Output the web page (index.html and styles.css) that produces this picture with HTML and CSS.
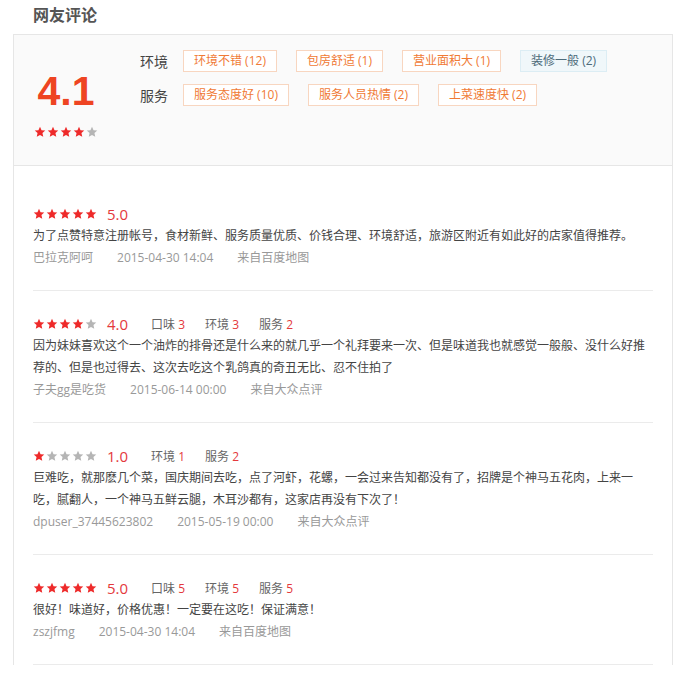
FILE: index.html
```html
<!DOCTYPE html>
<html lang="zh-CN">
<head>
  <meta charset="UTF-8">
  <title>网友评论</title>
  <link rel="stylesheet" href="styles.css">
</head>
<body>
  <svg class="defs" width="0" height="0">
    <symbol id="star" viewBox="0 0 24 24">
      <path d="M12 1.5l3.1 6.9 7.4.8-5.6 5 1.6 7.4L12 17.8l-6.5 3.8 1.6-7.4-5.6-5 7.4-.8z"/>
    </symbol>
  </svg>

  <div class="comments">
    <h2 class="title">网友评论</h2>
    <div class="panel">
      <!-- summary -->
      <div class="summary">
        <div class="score-box">
          <div class="score">4.1</div>
          <div class="stars">
            <svg class="on"><use href="#star"/></svg>
            <svg class="on"><use href="#star"/></svg>
            <svg class="on"><use href="#star"/></svg>
            <svg class="on"><use href="#star"/></svg>
            <svg class="off"><use href="#star"/></svg>
          </div>
        </div>
        <div class="tags">
          <div class="tag-row">
            <span class="tag-label">环境</span>
            <span class="tag">环境不错 (12)</span>
            <span class="tag">包房舒适 (1)</span>
            <span class="tag">营业面积大 (1)</span>
            <span class="tag bad">装修一般 (2)</span>
          </div>
          <div class="tag-row">
            <span class="tag-label">服务</span>
            <span class="tag">服务态度好 (10)</span>
            <span class="tag">服务人员热情 (2)</span>
            <span class="tag">上菜速度快 (2)</span>
          </div>
        </div>
      </div>

      <!-- review list -->
      <ul class="review-list">
        <li class="review">
          <div class="rate-line">
            <div class="stars">
              <svg class="on"><use href="#star"/></svg>
              <svg class="on"><use href="#star"/></svg>
              <svg class="on"><use href="#star"/></svg>
              <svg class="on"><use href="#star"/></svg>
              <svg class="on"><use href="#star"/></svg>
            </div>
            <span class="rate">5.0</span>
          </div>
          <p class="content">为了点赞特意注册帐号，食材新鲜、服务质量优质、价钱合理、环境舒适，旅游区附近有如此好的店家值得推荐。</p>
          <div class="meta"><span>巴拉克阿呵</span><span>2015-04-30 14:04</span><span>来自百度地图</span></div>
        </li>
        <li class="review">
          <div class="rate-line">
            <div class="stars">
              <svg class="on"><use href="#star"/></svg>
              <svg class="on"><use href="#star"/></svg>
              <svg class="on"><use href="#star"/></svg>
              <svg class="on"><use href="#star"/></svg>
              <svg class="off"><use href="#star"/></svg>
            </div>
            <span class="rate">4.0</span>
            <span class="aspect">口味 <em>3</em></span>
            <span class="aspect">环境 <em>3</em></span>
            <span class="aspect">服务 <em>2</em></span>
          </div>
          <p class="content">因为妹妹喜欢这个一个油炸的排骨还是什么来的就几乎一个礼拜要来一次、但是味道我也就感觉一般般、没什么好推荐的、但是也过得去、这次去吃这个乳鸽真的奇丑无比、忍不住拍了</p>
          <div class="meta"><span>子夫gg是吃货</span><span>2015-06-14 00:00</span><span>来自大众点评</span></div>
        </li>
        <li class="review">
          <div class="rate-line">
            <div class="stars">
              <svg class="on"><use href="#star"/></svg>
              <svg class="off"><use href="#star"/></svg>
              <svg class="off"><use href="#star"/></svg>
              <svg class="off"><use href="#star"/></svg>
              <svg class="off"><use href="#star"/></svg>
            </div>
            <span class="rate">1.0</span>
            <span class="aspect">环境 <em>1</em></span>
            <span class="aspect">服务 <em>2</em></span>
          </div>
          <p class="content">巨难吃，就那麽几个菜，国庆期间去吃，点了河虾，花螺，一会过来告知都没有了，招牌是个神马五花肉，上来一吃，腻翻人，一个神马五鲜云腿，木耳沙都有，这家店再没有下次了！</p>
          <div class="meta"><span>dpuser_37445623802</span><span>2015-05-19 00:00</span><span>来自大众点评</span></div>
        </li>
        <li class="review">
          <div class="rate-line">
            <div class="stars">
              <svg class="on"><use href="#star"/></svg>
              <svg class="on"><use href="#star"/></svg>
              <svg class="on"><use href="#star"/></svg>
              <svg class="on"><use href="#star"/></svg>
              <svg class="on"><use href="#star"/></svg>
            </div>
            <span class="rate">5.0</span>
            <span class="aspect">口味 <em>5</em></span>
            <span class="aspect">环境 <em>5</em></span>
            <span class="aspect">服务 <em>5</em></span>
          </div>
          <p class="content">很好！味道好，价格优惠！一定要在这吃！保证满意！</p>
          <div class="meta"><span>zszjfmg</span><span>2015-04-30 14:04</span><span>来自百度地图</span></div>
        </li>
      </ul>
    </div>
  </div>
</body>
</html>
```

FILE: styles.css
```css
body {
  margin: 0;
  background-color: #ffffff;
  font-family: "Open Sans", "Noto Sans CJK SC", sans-serif;
  font-size: 12px;
  color: #333333;
}
.defs {
  position: absolute;
  width: 0;
  height: 0;
}
.comments {
  width: 660px;
  margin-left: 13px;
}
.title {
  margin: 0 0 4px 20px;
  height: 30px;
  line-height: 30px;
  font-size: 16px;
  font-weight: bold;
  color: #555555;
}
.panel {
  border: 1px solid #e6e6e6;
  border-bottom: none;
}

/* summary */
.summary {
  display: flex;
  height: 130px;
  background-color: #fafafa;
  border-bottom: 1px solid #e6e6e6;
}
.score-box {
  width: 104px;
  padding-top: 36px;
  text-align: center;
}
.score {
  font-family: "Liberation Sans", sans-serif;
  font-size: 41px;
  line-height: 40px;
  font-weight: bold;
  color: #ee4422;
}
.score-box .stars {
  justify-content: center;
  margin-top: 15px;
}
.stars {
  display: flex;
  gap: 1px;
}
.stars svg {
  width: 12px;
  height: 12px;
}
.stars .on {
  fill: #ee2a2a;
}
.stars .off {
  fill: #b5b5b5;
}
.tags {
  padding: 15px 0 0 22px;
  display: flex;
  flex-direction: column;
  gap: 12px;
}
.tag-row {
  display: flex;
  align-items: center;
}
.tag-label {
  width: 28px;
  margin-right: 15px;
  font-size: 14px;
  color: #444444;
}
.tag {
  height: 20px;
  line-height: 20px;
  padding: 0 10px;
  margin-right: 19px;
  border: 1px solid #f8d6c0;
  background-color: #ffffff;
  color: #f07a35;
}
.tag.bad {
  border-color: #dcedf4;
  background-color: #f0f7fa;
  color: #4d6b7a;
}

/* reviews */
.review-list {
  list-style: none;
  margin: 0;
  padding: 15px 0 0;
}
.review {
  margin: 0 19px;
  padding: 21px 0;
  border-bottom: 1px solid #ebebeb;
}
.rate-line {
  display: flex;
  align-items: center;
  height: 23px;
}
.rate {
  margin-left: 10px;
  margin-right: 3px;
  font-size: 15px;
  color: #e4393c;
}
.aspect {
  margin-left: 20px;
  color: #666666;
}
.aspect em {
  font-style: normal;
  color: #e4393c;
}
.content {
  margin: 0;
  line-height: 22px;
  color: #444444;
}
.meta {
  line-height: 22px;
  color: #999999;
}
.meta span {
  margin-right: 24px;
}
```
